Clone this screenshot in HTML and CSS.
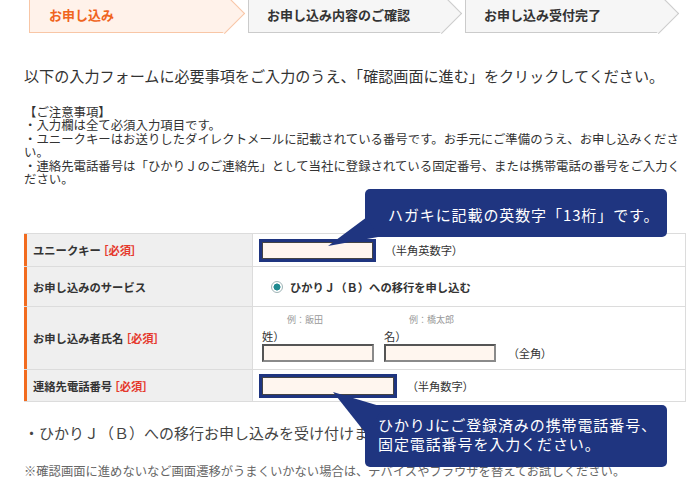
FILE: index.html
```html
<!DOCTYPE html>
<html lang="ja">
<head>
<meta charset="utf-8">
<title>お申し込み</title>
<link rel="stylesheet" href="styles.css">
</head>
<body>
<div class="page">
  <div class="steps">
    <div class="step step-current">お申し込み</div>
    <div class="step">お申し込み内容のご確認</div>
    <div class="step">お申し込み受付完了</div>
  </div>

  <p class="lead">以下の入力フォームに必要事項をご入力のうえ、「確認画面に進む」をクリックしてください。</p>

  <div class="notes">
    <p>【ご注意事項】</p>
    <p>・入力欄は全て必須入力項目です。</p>
    <p>・ユニークキーはお送りしたダイレクトメールに記載されている番号です。お手元にご準備のうえ、お申し込みください。</p>
    <p>・連絡先電話番号は「ひかりＪのご連絡先」として当社に登録されている固定番号、または携帯電話の番号をご入力ください。</p>
  </div>

  <div class="form">
    <div class="row r1">
      <div class="label">ユニークキー<span class="req">［必須］</span></div>
      <div class="value v1">
        <input class="inp inp-hl w1" type="text">
        <span class="unit u1">（半角英数字）</span>
      </div>
    </div>
    <div class="row r2">
      <div class="label">お申し込みのサービス</div>
      <div class="value v2">
        <span class="radio"></span>
        <span class="service">ひかりＪ（Ｂ）への移行を申し込む</span>
      </div>
    </div>
    <div class="row r3">
      <div class="label">お申し込み者氏名<span class="req">［必須］</span></div>
      <div class="value v3">
        <div class="namefield">
          <span class="ex">例：飯田</span>
          <span class="nlabel">姓）</span>
          <input class="inp inp-plain" type="text">
        </div>
        <div class="namefield">
          <span class="ex">例：橋太郎</span>
          <span class="nlabel">名）</span>
          <input class="inp inp-plain" type="text">
        </div>
        <span class="unit u3">（全角）</span>
      </div>
    </div>
    <div class="row r4">
      <div class="label">連絡先電話番号<span class="req">［必須］</span></div>
      <div class="value v4">
        <input class="inp inp-hl w4" type="text">
        <span class="unit u4">（半角数字）</span>
      </div>
    </div>
  </div>

  <p class="foot1">・ひかりＪ（Ｂ）への移行お申し込みを受け付けます。</p>
  <p class="foot2">※確認画面に進めないなど画面遷移がうまくいかない場合は、デバイスやブラウザを替えてお試しください。</p>

  <div class="tip tip1">
    <svg class="tail tail1" width="60" height="60" viewBox="0 0 60 60"><polygon points="3,57 42,28 53,48"/></svg>
    <span class="tiptext">ハガキに記載の英数字「13桁」です。</span>
  </div>
  <div class="tip tip2">
    <svg class="tail tail2" width="60" height="50" viewBox="0 0 60 50"><polygon points="3,2 53,17 37,45"/></svg>
    <span class="tiptext">ひかりJにご登録済みの携帯電話番号、固定電話番号を入力ください。</span>
  </div>
</div>
</body>
</html>
```
FILE: styles.css
```css
* { box-sizing: border-box; }
html, body { margin: 0; padding: 0; background: #fff; }
body {
  font-family: "Noto Sans CJK JP", "Noto Sans", sans-serif;
  color: #333;
}
p { margin: 0; }

.page {
  position: relative;
  display: flow-root;
  width: 700px;
  padding-left: 24px;
}

/* steps */
.steps {
  display: flex;
  gap: 23px;
  height: 40px;
  margin: -7px 0 0 5px;
}
.step {
  position: relative;
  width: 194px;
  height: 40px;
  display: flex;
  align-items: center;
  padding: 3px 0 0 18px;
  background: #f6f6f6;
  border: 1px solid #cbcbcb;
  border-right: 0;
  font-size: 13px;
  font-weight: 700;
  color: #333;
  white-space: nowrap;
}
.step::after {
  content: "";
  position: absolute;
  top: 4.86px;
  right: -14.14px;
  width: 28.28px;
  height: 28.28px;
  background: #f6f6f6;
  border-top: 1px solid #cbcbcb;
  border-right: 1px solid #cbcbcb;
  transform: rotate(45deg);
}
.step-current {
  width: 196px;
  padding-left: 19px;
  background: #fff2ea;
  border-color: #f8c6a6;
  color: #f0641e;
}
.step-current::after {
  background: #fff2ea;
  border-color: #f8c6a6;
}

.lead {
  margin-top: 32px;
  font-size: 15.1px;
  line-height: 20px;
  color: #333;
  white-space: nowrap;
}

.notes {
  margin-top: 21px;
  width: 662px;
  font-size: 12.4px;
  line-height: 13.4px;
  color: #333;
}

/* form */
.form {
  margin-top: 46.6px;
  width: 662px;
  border-top: 1px solid #dcdcdc;
  border-right: 1px solid #dcdcdc;
}
.row {
  display: grid;
  grid-template-columns: 229px 1fr;
  border-bottom: 1px solid #dcdcdc;
}
.r1 { height: 33px; }
.r2 { height: 40px; }
.r3 { height: 63px; }
.r4 { height: 32px; }
.label {
  display: flex;
  align-items: center;
  padding-left: 6px;
  background: #efefef;
  border-left: 3px solid #f26b1f;
  border-right: 1px solid #dcdcdc;
  font-size: 11.3px;
  font-weight: 700;
  color: #333;
}
.req {
  color: #e5392d;
  font-feature-settings: "palt";
  margin-left: 2px;
}
.value {
  display: flex;
  align-items: center;
  background: #fff;
}
.v1, .v4 { padding-left: 6px; }
.v2 { padding-left: 18px; }
.v3 {
  align-items: flex-end;
  padding: 0 0 7px 9px;
}

.inp {
  display: block;
  margin: 0;
  padding: 0;
  background: #fff6ef;
  font: inherit;
}
.inp-hl {
  border: 3px solid #1f3580;
  box-shadow: inset 0 0 0 1px #444;
}
.w1 { width: 117px; height: 23px; }
.w4 { width: 138px; height: 24px; }
.inp-plain {
  width: 112px;
  height: 18px;
  border: 2px solid;
  border-color: #555 #8a8a8a #8a8a8a #555;
}

.unit {
  font-size: 11.3px;
  color: #333;
  font-feature-settings: "palt";
}
.u1 { margin-left: 14px; }
.u4 { margin-left: 15px; }
.u3 { margin-left: 17px; line-height: 18px; }

.radio {
  width: 12px;
  height: 12px;
  border-radius: 50%;
  border: 1px solid #9fb4b6;
  background: radial-gradient(circle, #1f8a90 0 3.2px, #fff 3.8px);
}
.service {
  margin-left: 7px;
  font-size: 11.3px;
  font-weight: 700;
  color: #333;
}

.namefield {
  display: flex;
  flex-direction: column;
}
.namefield + .namefield { margin-left: 10px; }
.ex {
  padding-left: 25px;
  font-size: 9px;
  line-height: 12px;
  color: #999;
}
.nlabel {
  margin-top: 2px;
  font-size: 11.3px;
  line-height: 16px;
  color: #333;
}

.foot1 {
  margin-top: 21px;
  font-size: 15px;
  line-height: 20px;
  color: #444;
}
.foot2 {
  margin-top: 20px;
  font-size: 12.3px;
  line-height: 16px;
  color: #666;
  white-space: nowrap;
}

/* tooltips */
.tip {
  position: absolute;
  left: 365px;
  width: 302px;
  background: #1f3580;
  border-radius: 5px;
  color: #fff;
  font-size: 15px;
  letter-spacing: 0.9px;
}
.tip1 {
  top: 189px;
  height: 48px;
  display: flex;
  align-items: center;
  padding: 3px 0 0 23px;
  white-space: nowrap;
}
.tip2 {
  top: 405px;
  height: 62px;
  padding: 10px 8px 0 13px;
  line-height: 19px;
}
.tiptext { position: relative; }
.tail {
  position: absolute;
  fill: #1f3580;
  overflow: visible;
}
.tail1 { left: -40px; top: 0; }
.tail2 { left: -35px; top: -15px; }
```
